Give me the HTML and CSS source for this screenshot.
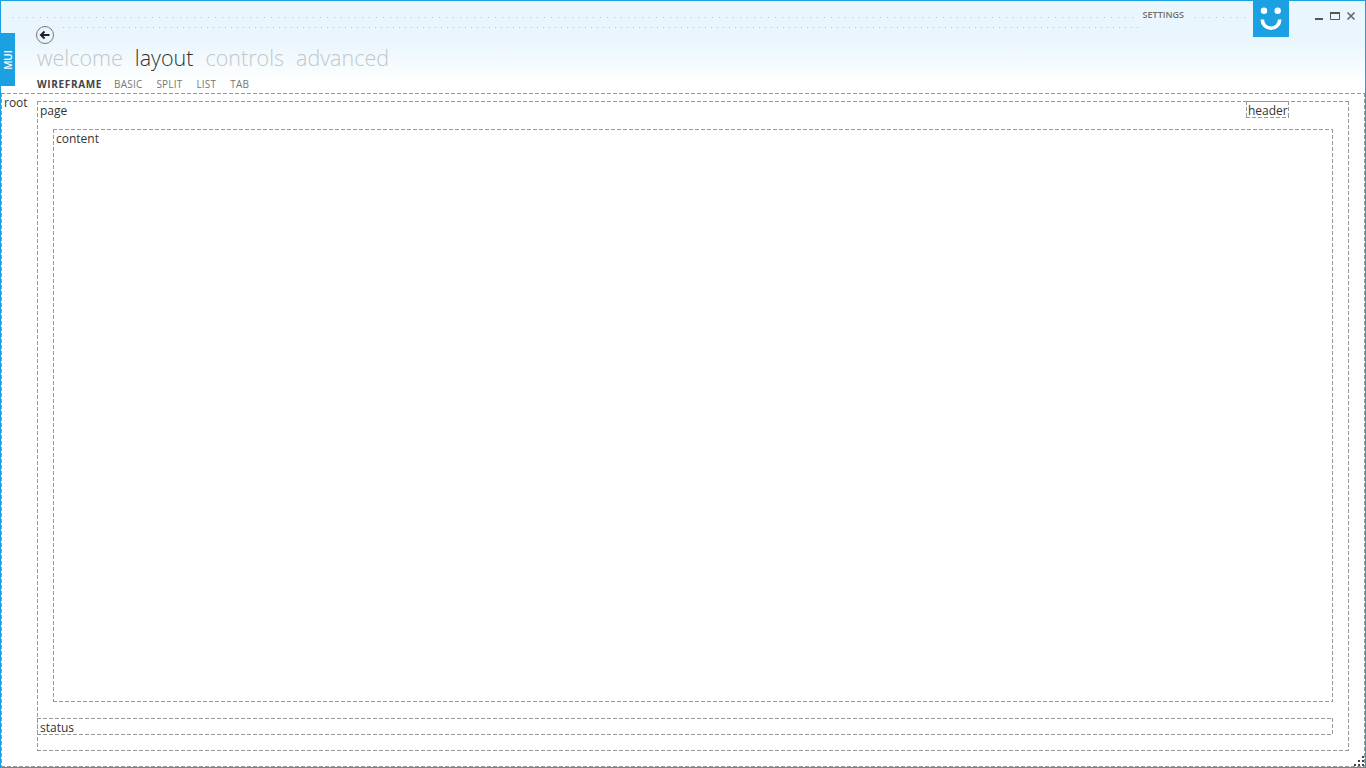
FILE: index.html
```html
<!DOCTYPE html>
<html lang="en">
<head>
    <meta charset="UTF-8">
    <meta name="viewport" content="width=device-width, initial-scale=1.0">
    <title>MUI layout</title>
    <link rel="stylesheet" href="styles.css">
</head>
<body>
    <div class="window">
        <div class="mui-tab"><span>MUI</span></div>

        <div class="top">
            <div class="caption">
                <span class="settings">SETTINGS</span>
                <div class="logo">
                    <svg width="36" height="36" viewBox="0 0 36 36">
                        <circle cx="11" cy="9.7" r="3.2" fill="#fff"/>
                        <circle cx="24.7" cy="9.7" r="3.2" fill="#fff"/>
                        <path d="M9.3 18.5a8.7 8.7 0 0 0 17.4 0" fill="none" stroke="#fff" stroke-width="3.6"/>
                    </svg>
                </div>
                <div class="buttons">
                    <svg width="10" height="10" viewBox="0 0 10 10"><rect x="1" y="7" width="8" height="2" fill="#555"/></svg>
                    <svg width="10" height="10" viewBox="0 0 10 10"><path d="M.5 1.5h9v7h-9z" fill="none" stroke="#555"/><rect y="1" width="10" height="2" fill="#555"/></svg>
                    <svg width="10" height="10" viewBox="0 0 10 10"><path d="M1.5 1.5l7 7M8.5 1.5l-7 7" fill="none" stroke="#666" stroke-width="1.6"/></svg>
                </div>
            </div>

            <a class="back" href="#">
                <svg width="18" height="18" viewBox="0 0 18 18">
                    <circle cx="9" cy="9" r="8.5" fill="none" stroke="#777"/>
                    <path d="M13.5 9H6" fill="none" stroke="#222" stroke-width="2"/>
                    <path d="M8.5 5.5L5 9l3.5 3.5" fill="none" stroke="#222" stroke-width="2"/>
                </svg>
            </a>

            <div class="title-links">
                <a href="#">welcome</a>
                <a href="#" class="active">layout</a>
                <a href="#">controls</a>
                <a href="#">advanced</a>
            </div>

            <div class="sub-links">
                <a href="#" class="active">WIREFRAME</a>
                <a href="#">BASIC</a>
                <a href="#">SPLIT</a>
                <a href="#">LIST</a>
                <a href="#">TAB</a>
            </div>
        </div>

        <div class="root dashed">
            <div class="root-label">root</div>
            <div class="page dashed">
                <div class="page-head">
                    <span class="page-label">page</span>
                    <span class="header-box dashed">header</span>
                </div>
                <div class="content dashed">content</div>
                <div class="status dashed">status</div>
            </div>
        </div>

        <svg class="grip" width="12" height="12" viewBox="0 0 12 12" fill="#444">
            <rect x="9" y="1" width="2" height="2"/>
            <rect x="5" y="5" width="2" height="2"/>
            <rect x="9" y="5" width="2" height="2"/>
            <rect x="1" y="9" width="2" height="2"/>
            <rect x="5" y="9" width="2" height="2"/>
            <rect x="9" y="9" width="2" height="2"/>
        </svg>
    </div>
</body>
</html>
```

FILE: styles.css
```css
html, body {
    margin: 0;
    padding: 0;
    overflow: hidden;
}

body {
    font-family: "Open Sans", "Noto Sans", sans-serif;
    font-size: 12px;
    color: #333;
    background-color: #fff;
}

a {
    text-decoration: none;
    color: inherit;
}

.window {
    position: relative;
    box-sizing: border-box;
    width: 1366px;
    height: 768px;
    display: flex;
    flex-direction: column;
    border: 1px solid #1ba1e2;
    background: linear-gradient(to bottom, #e9f6fd 0, #e9f6fd 40px, #fff 82px);
}

/* Dotted rows in the caption band */
.window::before,
.window::after {
    content: "";
    position: absolute;
    height: 1px;
    background-image: linear-gradient(to right, #b9c2c7 1px, transparent 1px);
}

.window::before {
    left: 11px;
    top: 16px;
    width: 1234px;
    background-size: 7px 1px;
}

.window::after {
    left: 62px;
    top: 26px;
    width: 1078px;
    background-size: 6px 1px;
}

/* 4px dash, 2px gap, same as the wireframe boxes */
.dashed {
    box-sizing: border-box;
    background-image:
        repeating-linear-gradient(to right, #999 0 4px, transparent 4px 6px),
        repeating-linear-gradient(to right, #999 0 4px, transparent 4px 6px),
        repeating-linear-gradient(to bottom, #999 0 4px, transparent 4px 6px),
        repeating-linear-gradient(to bottom, #999 0 4px, transparent 4px 6px);
    background-size: 100% 1px, 100% 1px, 1px 100%, 1px 100%;
    background-position: left top, left bottom, left top, right top;
    background-repeat: no-repeat;
}

.mui-tab {
    position: absolute;
    z-index: 1;
    left: -1px;
    top: 32px;
    width: 15px;
    height: 53px;
    display: flex;
    align-items: center;
    justify-content: center;
    background-color: #1ba1e2;
    color: #fff;
    font-size: 10px;
    font-weight: 600;
}

.mui-tab span {
    transform: rotate(-90deg);
}

.top {
    height: 92px;
    flex: none;
    padding-left: 36px;
    box-sizing: border-box;
}

.caption {
    position: absolute;
    z-index: 1;
    top: 0;
    right: 0;
    display: flex;
    align-items: flex-start;
}

.settings {
    margin-top: 7px;
    margin-right: 61px;
    padding: 0 8px;
    background-color: #e9f6fd;
    font-size: 9px;
    font-weight: 600;
    color: #707070;
}

.logo {
    width: 36px;
    height: 36px;
    background-color: #1ba1e2;
}

.buttons {
    display: flex;
    gap: 6px;
    margin: 10px 9px 0 25px;
}

.back {
    display: block;
    height: 18px;
    padding-top: 25px;
    margin-left: -1px;
}

.title-links {
    display: flex;
    gap: 12px;
    margin-top: -2px;
    font-size: 21.5px;
    font-weight: 300;
    line-height: 32px;
    color: #c3c7ca;
}

.title-links .active {
    color: #333;
}

.sub-links {
    display: flex;
    gap: 14px;
    margin-top: 3px;
    font-size: 10px;
    line-height: 14px;
    letter-spacing: 0.2px;
    color: #777;
}

.sub-links .active {
    margin-right: -2px;
    font-weight: 700;
    letter-spacing: 0.65px;
    color: #444;
}

.root {
    flex: 1;
    display: flex;
    min-height: 0;
    padding: 0 16px 16px 0;
}

.root-label {
    width: 36px;
    flex: none;
    padding: 1px 0 0 3px;
    box-sizing: border-box;
    line-height: 17px;
}

.page {
    flex: 1;
    display: flex;
    flex-direction: column;
    margin-top: 8px;
}

.page-head {
    display: flex;
    justify-content: space-between;
    align-items: flex-start;
    flex: none;
    height: 28px;
    padding-left: 3px;
    margin-right: 60px;
}

.page-label {
    line-height: 19px;
}

.header-box {
    width: 43px;
    height: 17px;
    padding-left: 2px;
    line-height: 19px;
}

.content {
    flex: 1;
    margin: 0 16px;
    padding: 1px 0 0 3px;
    line-height: 17px;
}

.status {
    flex: none;
    height: 17px;
    margin: 16px 16px 16px 0;
    padding: 2px 0 0 3px;
    line-height: 16px;
}

.grip {
    position: absolute;
    right: 0;
    bottom: 0;
}
```
